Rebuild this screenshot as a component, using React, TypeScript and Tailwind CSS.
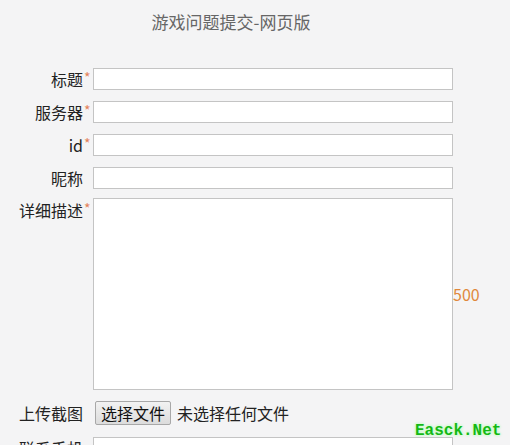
import React from 'react';

const FONT = '[font-family:"Noto_Sans_CJK_SC","Noto_Sans",sans-serif]';

function Label({ text, required }: { text: string; required?: boolean }) {
  return (
    <div className="w-[93px] shrink-0 flex justify-end items-start pr-[2px]">
      <span className="text-[16px] leading-[22px] text-[#222]">{text}</span>
      <span className="w-[8px] text-[14px] leading-[18px] text-[#e4825a] pl-[1px]">{required ? '*' : ''}</span>
    </div>
  );
}

const ROWS = [
  { label: '标题', required: true },
  { label: '服务器', required: true },
  { label: 'id', required: true },
  { label: '昵称', required: false },
];

export default function App() {
  return (
    <div className={`relative w-[510px] h-[445px] overflow-hidden bg-[#f4f4f5] ${FONT}`}>
      {/* Title */}
      <div className="w-[462px] pt-[10px] text-center text-[17px] leading-[24px] text-[#666]">
        游戏问题提交-网页版
      </div>

      <div className="mt-[34px] flex flex-col">
        {ROWS.map((r, i) => (
          <div key={r.label} className={`flex items-center ${i > 0 ? 'mt-[11px]' : ''}`}>
            <Label text={r.label} required={r.required} />
            <input className="w-[360px] h-[22px] bg-white border border-[#c4c4c4] outline-none" />
          </div>
        ))}

        {/* Description */}
        <div className="mt-[9px] flex items-start">
          <div className="pt-[1px]">
            <Label text="详细描述" required />
          </div>
          <textarea className="w-[360px] h-[192px] bg-white border border-[#c4c4c4] outline-none resize-none" />
          <span className="self-center text-[16px] text-[#e0883c] leading-none">500</span>
        </div>

        {/* Upload */}
        <div className="mt-[11px] flex items-center">
          <Label text="上传截图" />
          <button className="ml-[2px] w-[76px] h-[24px] border border-[#a8a8a8] bg-gradient-to-b from-[#f2f2f2] to-[#dcdcdc] text-[16px] leading-none text-[#111] rounded-[2px]">
            选择文件
          </button>
          <span className="ml-[6px] text-[16px] text-[#222]">未选择任何文件</span>
        </div>

        {/* Phone */}
        <div className="mt-[12px] flex items-start">
          <Label text="联系手机" />
          <input className="w-[360px] h-[22px] bg-white border border-[#c4c4c4] outline-none" />
        </div>
      </div>

      {/* Watermark */}
      <div className="absolute left-[415px] top-[420px] text-[16px] font-bold leading-[22px] text-[#14b814] [font-family:'Liberation_Mono',monospace] [text-shadow:0_0_2px_#cfc,0_0_2px_#fff,0_0_3px_#8f8]">
        Easck.Net
      </div>
    </div>
  );
}
